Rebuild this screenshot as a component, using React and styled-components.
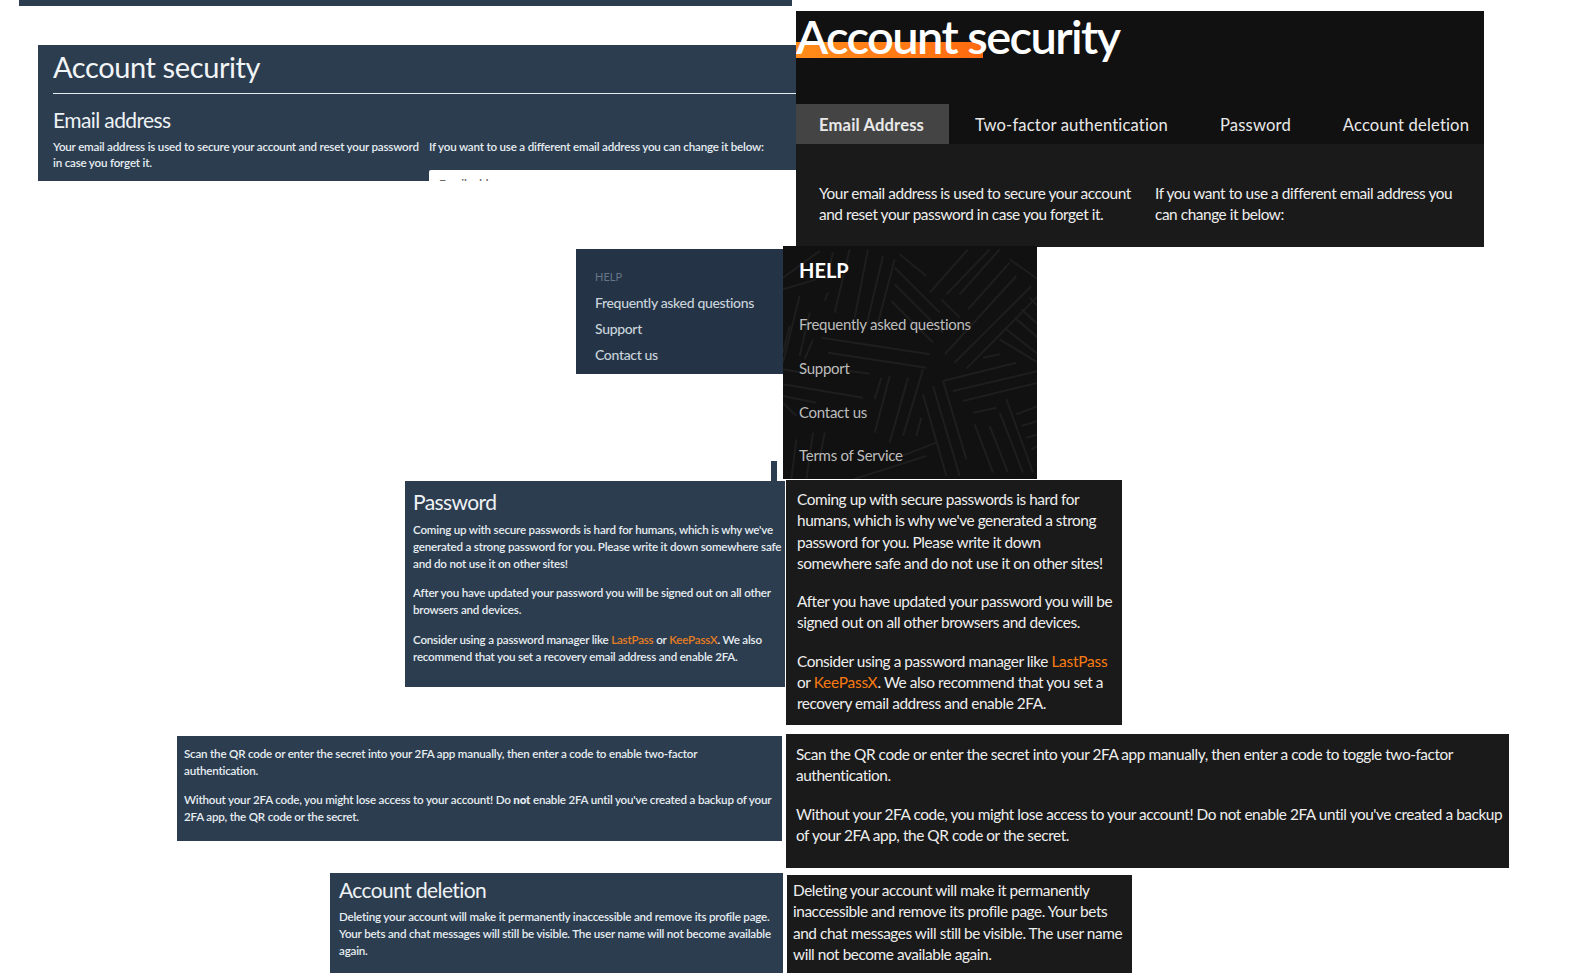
import React from "react";
import styled, { createGlobalStyle } from "styled-components";

const Global = createGlobalStyle`
  html, body { margin: 0; padding: 0; background: #fff; }
  p { margin: 0; }
`;

const Canvas = styled.div`
  position: relative;
  width: 1576px;
  height: 973px;
  overflow: hidden;
  background: #fff;
`;

// every shot in the collage is a clipping of the page, its place is the content
const Shot = styled.section`
  position: absolute;
  left: ${(p) => p.$x}px;
  top: ${(p) => p.$y}px;
  width: ${(p) => p.$w}px;
  height: ${(p) => p.$h}px;
  overflow: hidden;
  box-sizing: border-box;
  padding: ${(p) => p.$pad || "0"};
  background: ${(p) => p.$bg || "#2d3d50"};
`;

const OldShot = styled(Shot)`
  font-family: Lato, sans-serif;
  font-size: 11.6px;
  font-weight: 600;
  line-height: 17px;
  letter-spacing: -0.2px;
  color: #e6edf1;
`;

const NewShot = styled(Shot)`
  font-family: Lato, sans-serif;
  font-size: 15.4px;
  line-height: 21.3px;
  letter-spacing: -0.44px;
  color: #eeeeee;
  background: ${(p) => p.$bg || "#1a1a1a"};
`;

const OldTitle = styled.h1`
  margin: 0;
  font-size: 29px;
  font-weight: 400;
  line-height: 44px;
  letter-spacing: -0.4px;
  color: #f2f5f7;
  border-bottom: 1px solid #e6edf1;
  height: 48px;
`;

const OldHeading = styled.h2`
  margin: ${(p) => p.$top || 0}px 0 0;
  font-size: 21px;
  font-weight: 400;
  line-height: ${(p) => p.$lh || 28}px;
  letter-spacing: -0.6px;
  color: #eef2f5;
`;

const Columns = styled.div`
  display: grid;
  grid-template-columns: 368px 1fr;
  column-gap: 8px;
  margin-top: 4px;
  line-height: 16px;
`;

const InputStub = styled.div`
  background: #fff;
  height: 20px;
  margin-top: 15px;
  padding: 7px 10px 0;
  box-sizing: border-box;
  border-radius: 2px 0 0 0;
  color: #666;
  font-size: 12px;
  line-height: 14px;
`;

const Copy = styled.p`
  margin-top: ${(p) => p.$gap || 0}px;
`;

const OldLink = styled.a`
  color: #e67e22;
`;

const NewLink = styled.a`
  color: #f97a12;
  letter-spacing: -0.2px;
`;

const NewTitle = styled.h1`
  position: relative;
  margin: 0;
  height: 93px;
  font-size: 47px;
  font-weight: 600;
  line-height: 50px;
  letter-spacing: -1.6px;
  color: #fff;
  &::before {
    content: "";
    position: absolute;
    left: 0;
    top: 31px;
    width: 187px;
    height: 16px;
    background: linear-gradient(90deg, #ff8c1a, #ff6a10);
  }
  span { position: relative; }
`;

const TitleBar = styled.div`
  background: #111;
  height: 133px;
`;

const Tabs = styled.nav`
  display: flex;
  height: 40px;
`;

const Tab = styled.div`
  flex: none;
  display: flex;
  align-items: center;
  box-sizing: border-box;
  white-space: nowrap;
  width: ${(p) => (p.$active ? "153px" : "auto")};
  padding: ${(p) => p.$pad};
  font-size: 16.6px;
  letter-spacing: 0.15px;
  font-weight: ${(p) => (p.$active ? 700 : 400)};
  color: #e9e9e9;
  background: ${(p) => (p.$active ? "#444" : "transparent")};
`;

const NewColumns = styled.div`
  display: grid;
  grid-template-columns: 336px 1fr;
  padding: 39px 23px 0;
`;

const HelpLabel = styled.div`
  font-size: 11px;
  font-weight: 400;
  line-height: 14px;
  letter-spacing: 0;
  color: #66768a;
  margin-bottom: 6px;
`;

const HelpLink = styled.div`
  font-size: 14px;
  font-weight: 500;
  line-height: 26px;
  letter-spacing: -0.33px;
  color: #c9d4dc;
`;

const Pattern = styled.svg`
  position: absolute;
  left: 0;
  top: 0;
`;

const DarkHelp = styled(NewShot)`
  padding: 12px 16px;
  background: #111;
  letter-spacing: -0.27px;
`;

const DarkHelpInner = styled.div`
  position: relative;
  color: #bdbdbd;
`;

const DarkHeading = styled.div`
  font-size: 20px;
  font-weight: 700;
  line-height: 24px;
  letter-spacing: 0;
  color: #fff;
  margin-bottom: 21px;
`;

const DarkLink = styled.div`
  font-size: 15px;
  line-height: 43.8px;
`;

const Sliver = styled.div`
  position: absolute;
  left: 771px;
  top: 461px;
  width: 6px;
  height: 20px;
  background: #2d3d50;
`;

// background weave of the help box, traced at 3x
const weave = [
  [440, 140, 555, 10], [490, 145, 620, 10], [530, 145, 650, 10], [555, 190, 680, 50],
  [485, 325, 700, 90], [515, 350, 745, 120], [550, 368, 765, 150], [600, 335, 650, 325],
  [335, 65, 470, 200], [335, 115, 480, 260], [325, 165, 450, 290], [350, 25, 430, 90], [475, 160, 530, 215],
  [680, 40, 765, 100], [715, 190, 765, 235], [695, 215, 765, 275], [670, 250, 765, 325], [650, 280, 765, 350], [740, 155, 765, 180],
  [200, 10, 155, 200], [255, 10, 215, 215], [300, 30, 250, 240], [335, 40, 280, 250], [135, 140, 125, 165],
  [80, 200, 50, 330], [50, 150, 0, 350], [90, 280, 65, 340], [20, 240, 0, 320], [150, 20, 130, 100],
  [0, 95, 110, 15], [0, 130, 100, 100],
  [115, 275, 440, 325], [135, 320, 430, 365], [200, 375, 260, 383], [0, 370, 60, 380], [0, 415, 240, 455], [0, 450, 100, 470],
  [420, 370, 360, 570], [375, 395, 320, 590], [320, 390, 275, 560], [295, 395, 275, 460], [415, 515, 400, 570],
  [480, 405, 550, 640], [450, 420, 530, 690], [420, 445, 490, 690],
  [480, 405, 700, 350], [510, 435, 765, 375], [540, 465, 765, 410], [570, 500, 640, 485],
  [575, 535, 630, 680], [620, 540, 675, 680], [650, 500, 720, 680], [670, 460, 750, 680],
  [700, 505, 765, 480], [715, 540, 765, 525], [730, 575, 765, 565], [745, 610, 765, 600],
  [40, 580, 25, 700], [90, 560, 70, 700], [125, 560, 110, 640], [0, 470, 40, 510],
  [210, 700, 430, 630], [330, 640, 460, 590],
];

const App = () => {
  return (
    <Canvas>
      <Global />

      <Shot $x={19} $y={0} $w={773} $h={6} />

      <OldShot $x={38} $y={45} $w={758} $h={136} $pad="0 0 0 15px">
        <OldTitle>Account security</OldTitle>
        <OldHeading $top={11} $lh={30}>Email address</OldHeading>
        <Columns>
          <p>Your email address is used to secure your account and reset your password in case you forget it.</p>
          <div>
            <p>If you want to use a different email address you can change it below:</p>
            <InputStub>Email address</InputStub>
          </div>
        </Columns>
      </OldShot>

      <NewShot $x={796} $y={11} $w={688} $h={236}>
        <TitleBar>
          <NewTitle><span>Account security</span></NewTitle>
          <Tabs>
            <Tab $active $pad="3px 0 0 23px">Email Address</Tab>
            <Tab $pad="3px 26px 0">Two-factor authentication</Tab>
            <Tab $pad="3px 26px 0">Password</Tab>
            <Tab $pad="3px 26px 0">Account deletion</Tab>
          </Tabs>
        </TitleBar>
        <NewColumns>
          <p>Your email address is used to secure your account and reset your password in case you forget it.</p>
          <p>If you want to use a different email address you can change it below:</p>
        </NewColumns>
      </NewShot>

      <OldShot $x={576} $y={249} $w={207} $h={125} $bg="#243345" $pad="21px 19px">
        <HelpLabel>HELP</HelpLabel>
        <HelpLink>Frequently asked questions</HelpLink>
        <HelpLink>Support</HelpLink>
        <HelpLink>Contact us</HelpLink>
      </OldShot>

      <DarkHelp $x={783} $y={246} $w={254} $h={233}>
        <Pattern width="255" height="234" viewBox="0 0 765 702">
          {weave.map(([x1, y1, x2, y2], i) => (
            <line key={i} x1={x1} y1={y1} x2={x2} y2={y2} stroke="#1e1e1e" strokeWidth="6" />
          ))}
        </Pattern>
        <DarkHelpInner>
          <DarkHeading>HELP</DarkHeading>
          <DarkLink>Frequently asked questions</DarkLink>
          <DarkLink>Support</DarkLink>
          <DarkLink>Contact us</DarkLink>
          <DarkLink>Terms of Service</DarkLink>
        </DarkHelpInner>
      </DarkHelp>

      <Sliver />

      <OldShot $x={405} $y={481} $w={380} $h={206} $pad="7px 0 0 8px">
        <OldHeading $lh={28}>Password</OldHeading>
        <Copy $gap={5}>Coming up with secure passwords is hard for humans, which is why we've generated a strong password for you. Please write it down somewhere safe and do not use it on other sites!</Copy>
        <Copy $gap={12}>After you have updated your password you will be signed out on all other browsers and devices.</Copy>
        <Copy $gap={13}>Consider using a password manager like <OldLink>LastPass</OldLink> or <OldLink>KeePassX</OldLink>. We also recommend that you set a recovery email address and enable 2FA.</Copy>
      </OldShot>

      <NewShot $x={786} $y={480} $w={336} $h={245} $pad="9px 5px 0 11px">
        <Copy>Coming up with secure passwords is hard for humans, which is why we've generated a strong password for you. Please write it down somewhere safe and do not use it on other sites!</Copy>
        <Copy $gap={17}>After you have updated your password you will be signed out on all other browsers and devices.</Copy>
        <Copy $gap={17}>Consider using a password manager like <NewLink>LastPass</NewLink> or <NewLink>KeePassX</NewLink>. We also recommend that you set a recovery email address and enable 2FA.</Copy>
      </NewShot>

      <OldShot $x={177} $y={736} $w={605} $h={105} $pad="9px 7px 0">
        <Copy>Scan the QR code or enter the secret into your 2FA app manually, then enter a code to enable two-factor<br />authentication.</Copy>
        <Copy $gap={12}>Without your 2FA code, you might lose access to your account! Do <b>not</b> enable 2FA until you've created a backup of your 2FA app, the QR code or the secret.</Copy>
      </OldShot>

      <NewShot $x={786} $y={734} $w={723} $h={134} $pad="10px 0 0 10px">
        <Copy>Scan the QR code or enter the secret into your 2FA app manually, then enter a code to toggle two-factor authentication.</Copy>
        <Copy $gap={17}>Without your 2FA code, you might lose access to your account! Do not enable 2FA until you've created a backup of your 2FA app, the QR code or the secret.</Copy>
      </NewShot>

      <OldShot $x={330} $y={873} $w={453} $h={100} $pad="3px 8px 0 9px">
        <OldHeading $lh={27}>Account deletion</OldHeading>
        <Copy $gap={5}>Deleting your account will make it permanently inaccessible and remove its profile page. Your bets and chat messages will still be visible. The user name will not become available again.</Copy>
      </OldShot>

      <NewShot $x={787} $y={875} $w={345} $h={98} $pad="5px 6px 0">
        <Copy>Deleting your account will make it permanently inaccessible and remove its profile page. Your bets and chat messages will still be visible. The user name will not become available again.</Copy>
      </NewShot>
    </Canvas>
  );
};

export default App;
